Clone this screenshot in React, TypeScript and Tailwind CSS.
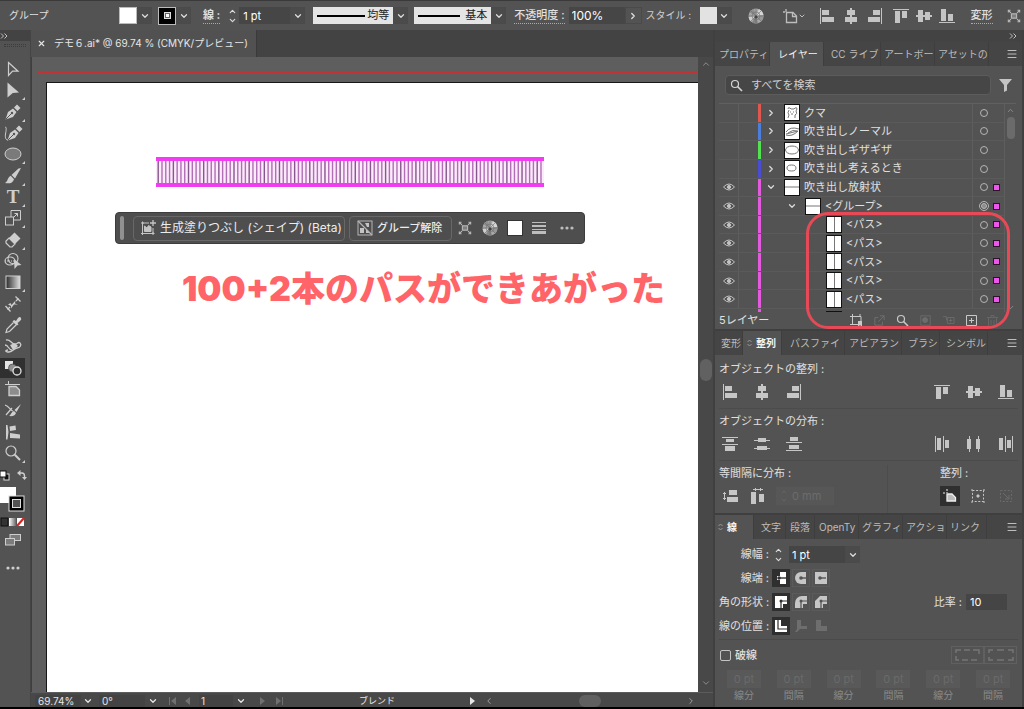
import type { ReactNode } from 'react'
import { ChevronDown, ChevronLeft, ChevronRight, ChevronUp, Menu, X } from 'lucide-react'

type Box = [number, number, number, number]

// Small 16px glyphs made only of bars
const BARS = {
  left: [[1, 0, 1, 16], [3, 2, 7, 5], [3, 9, 12, 5]],
  centerX: [[7, 0, 2, 16], [4, 2, 8, 5], [2, 9, 12, 5]],
  right: [[14, 0, 1, 16], [6, 2, 7, 5], [1, 9, 12, 5]],
  top: [[0, 1, 16, 1], [2, 3, 5, 12], [9, 3, 5, 7]],
  centerY: [[0, 7, 16, 2], [2, 2, 5, 12], [9, 4, 5, 8]],
  bottom: [[0, 14, 16, 1], [2, 1, 5, 12], [9, 6, 5, 7]],
  distTop: [[0, 1, 16, 1], [4, 3, 8, 3], [0, 8, 16, 1], [3, 10, 10, 5]],
  distMidY: [[0, 4, 16, 1], [4, 2, 8, 4], [0, 12, 16, 1], [3, 10, 10, 4]],
  distBottom: [[4, 1, 8, 4], [0, 6, 16, 1], [3, 9, 10, 4], [0, 14, 16, 1]],
  distLeft: [[1, 0, 1, 16], [3, 2, 4, 12], [9, 0, 1, 16], [11, 4, 4, 8]],
  distMidX: [[3, 0, 1, 16], [1, 3, 4, 10], [12, 0, 1, 16], [10, 3, 4, 10]],
  distRight: [[1, 2, 4, 12], [7, 0, 1, 16], [9, 4, 4, 8], [14, 0, 1, 16]],
  spaceY: [[2, 4, 1, 8], [1, 5, 3, 1], [1, 10, 3, 1], [7, 2, 8, 5], [5, 9, 11, 5]],
  spaceX: [[3, 1, 10, 1], [5, 0, 1, 3], [10, 0, 1, 3], [1, 4, 5, 12], [9, 6, 5, 8]],
} satisfies Record<string, Box[]>

type BarName = keyof typeof BARS

function BarIcon({ name }: { name: BarName }) {
  return (
    <svg viewBox="0 0 16 16" className="h-4 w-4" fill="currentColor" aria-hidden="true">
      {BARS[name].map(([x, y, w, h], i) => (
        <rect key={i} x={x} y={y} width={w} height={h} />
      ))}
    </svg>
  )
}

function IconButton({ label, children, className = '' }: { label: string; children: ReactNode; className?: string }) {
  return (
    <button type="button" aria-label={label} className={`flex shrink-0 items-center justify-center ${className}`}>
      {children}
    </button>
  )
}

function DropButton({ label }: { label: string }) {
  return (
    <IconButton label={label} className="h-[17px] w-[15px] border border-[#4a4a4a] bg-[#4b4b4b] text-[#dcdcdc]">
      <ChevronDown size={10} strokeWidth={3} />
    </IconButton>
  )
}

function Stepper({ label }: { label: string }) {
  return (
    <IconButton label={label} className="h-[18px] w-[13px] flex-col text-[#dcdcdc]">
      <ChevronUp size={9} strokeWidth={3} />
      <ChevronDown size={9} strokeWidth={3} />
    </IconButton>
  )
}

function SphereIcon() {
  return (
    <svg viewBox="0 0 16 16" className="h-4 w-4" aria-hidden="true">
      <circle cx="8" cy="8" r="7.5" fill="#a8a8a8" />
      <path d="M8 8 L1.5 4.5 A7.5 7.5 0 0 1 6 .8Z" fill="#8e8e8e" />
      <path d="M8 8 L11 1.2 A7.5 7.5 0 0 1 15.4 7Z" fill="#d6d6d6" />
      <path d="M8 8 L15.4 7 A7.5 7.5 0 0 1 13 13.6Z" fill="#979797" />
      <path d="M8 8 L10 15.2 A7.5 7.5 0 0 1 4 14.3Z" fill="#858585" />
      <path d="M8 8 L.6 9 A7.5 7.5 0 0 0 3 13.6Z" fill="#cfcfcf" />
      <path d="M8 .5v15M.5 8h15M2.700 2.700l10.600 10.600M13.300 2.700L2.700 13.300" stroke="#6a6a6a" strokeWidth=".6" />
      <circle cx="8" cy="8" r="4" fill="none" stroke="#707070" strokeWidth=".6" />
      <circle cx="8" cy="9" r="1.6" fill="#454545" />
    </svg>
  )
}

function IsolateIcon() {
  return (
    <svg viewBox="0 0 16 16" className="h-3.5 w-3.5" fill="none" stroke="currentColor" strokeWidth="1.2" aria-hidden="true">
      <rect x="5" y="5.5" width="6" height="5" fill="#808080" />
      <path d="M1.5 1.5 L4.5 4.5 M14.5 1.5 L11.5 4.5 M1.5 14.5 L4.5 11.5 M14.5 14.5 L11.5 11.5" />
      <path d="M1.5 4V1.5H4 M12 1.5h2.5V4 M1.5 12v2.5H4 M12 14.5h2.5V12" />
    </svg>
  )
}

function ArtboardIcon() {
  return (
    <svg viewBox="0 0 16 16" className="h-4 w-4" fill="none" stroke="currentColor" strokeWidth="1.3" aria-hidden="true">
      <path d="M4 1v3M1 4h2" />
      <path d="M4.5 4.5H11L14.5 8v6.5h-10Z" />
      <path d="M10.5 4.5v4h4" />
    </svg>
  )
}

function Magnifier() {
  return (
    <svg viewBox="0 0 13 13" className="h-[13px] w-[13px] shrink-0" fill="none" stroke="currentColor" aria-hidden="true">
      <circle cx="5" cy="5" r="3.500" strokeWidth="1.200" />
      <path d="M7.500 7.500 L12 12" strokeWidth="1.600" />
    </svg>
  )
}

function DoubleChevron() {
  return (
    <svg viewBox="0 0 8 6" className="h-1.5 w-2" fill="none" stroke="#c0c0c0" aria-hidden="true">
      <path d="M1 .5 L3.500 3 L1 5.500 M4.500 .5 L7 3 L4.500 5.500" />
    </svg>
  )
}

function ControlBar() {
  return (
    <header className="flex h-[30px] shrink-0 items-center overflow-hidden border-t border-[#3a3a3a] bg-[#535353] pl-[9px] text-[11px] whitespace-nowrap">
      <span className="w-[110px] shrink-0 text-[10px]">グループ</span>
      <button type="button" aria-label="塗り" className="h-[17px] w-[18px] shrink-0 border border-[#bbb] bg-white" />
      <DropButton label="塗りの色" />
      <button type="button" aria-label="線の色" className="ml-1.5 flex h-[18px] w-[18px] shrink-0 items-center justify-center border border-[#bbb] bg-black">
        <span className="flex h-[7px] w-[7px] items-center justify-center border border-[#ddd] bg-[#666]">
          <span className="h-[3px] w-[3px] bg-white" />
        </span>
      </button>
      <DropButton label="線の色を選択" />
      <label htmlFor="bar-stroke" className="ml-3 shrink-0 border-b border-dotted border-[#aaa] leading-[15px] font-bold">線 :</label>
      <span className="ml-1.5 flex shrink-0 items-center">
        <Stepper label="線幅を増減" />
        <input id="bar-stroke" defaultValue="1 pt" className="h-[17px] w-[51px] bg-[#464646] px-1 text-[11px] text-white" />
        <DropButton label="線幅の一覧" />
      </span>
      <button type="button" className="ml-2 flex h-[17px] w-[80px] shrink-0 items-center justify-between bg-[#e4e4e4] px-1 text-[#222]">
        <span className="h-[2px] w-12 bg-black" />
        均等
      </button>
      <DropButton label="可変線幅" />
      <button type="button" className="ml-1.5 flex h-[17px] w-[77px] shrink-0 items-center justify-between bg-[#e4e4e4] px-1 text-[#222]">
        <span className="h-[2px] w-[42px] bg-black" />
        基本
      </button>
      <DropButton label="ブラシ定義" />
      <label htmlFor="bar-opacity" className="ml-2 shrink-0 border-b border-dotted border-[#aaa] leading-[15px] font-medium">不透明度 :</label>
      <input id="bar-opacity" defaultValue="100%" className="ml-1 h-[17px] w-[56px] shrink-0 bg-[#464646] px-[3px] text-[12px] text-white" />
      <IconButton label="不透明度の詳細" className="h-[17px] w-[17px] border border-[#4a4a4a]">
        <ChevronRight size={10} strokeWidth={3} />
      </IconButton>
      <span className="ml-1 w-[54px] shrink-0 text-[10px] text-[#cfcfcf]">スタイル :</span>
      <button type="button" aria-label="スタイル" className="h-[17px] w-[17px] shrink-0 bg-[#e2e2e2]" />
      <DropButton label="スタイルの一覧" />
      <IconButton label="オブジェクトを再配色" className="ml-4"><SphereIcon /></IconButton>
      <IconButton label="アートボード" className="ml-[18px] text-[#bdbdbd]">
        <ArtboardIcon />
        <ChevronDown size={8} strokeWidth={3} />
      </IconButton>
      <div className="ml-[13px] flex shrink-0 gap-2 text-[#c4c4c4]">
        <IconButton label="左に整列"><BarIcon name="left" /></IconButton>
        <IconButton label="水平方向中央に整列"><BarIcon name="centerX" /></IconButton>
        <IconButton label="右に整列"><BarIcon name="right" /></IconButton>
      </div>
      <div className="ml-2.5 flex shrink-0 gap-[7px] text-[#c4c4c4]">
        <IconButton label="上に整列"><BarIcon name="top" /></IconButton>
        <IconButton label="垂直方向中央に整列"><BarIcon name="centerY" /></IconButton>
        <IconButton label="下に整列"><BarIcon name="bottom" /></IconButton>
      </div>
      <button type="button" className="ml-4 shrink-0 border-b border-dotted border-[#aaa] leading-[15px] font-medium">変形</button>
      <IconButton label="編集モード" className="ml-3.5 text-[#bdbdbd]"><IsolateIcon /></IconButton>
    </header>
  )
}

const TOOLS: { label: string; more?: boolean; active?: boolean; art: ReactNode }[] = [
  { label: '選択', art: <path d="M4.5 2.5 L14 11.2 H8.6 L4.5 15.5Z" fill="none" stroke="currentColor" strokeWidth="1.2" /> },
  { label: 'ダイレクト選択', more: true, art: <path d="M3.5 1.5 L15 11.5 L8.8 12 L3.5 16.5Z" /> },
  { label: 'ペン', more: true, art: <Nib /> },
  {
    label: '曲線',
    art: (
      <>
        <g transform="translate(2 0)"><Nib /></g>
        <path d="M1 3c2 0 1 4 .5 7s0 6 2.5 6" fill="none" stroke="currentColor" />
      </>
    ),
  },
  { label: '楕円形', more: true, art: <ellipse cx="9" cy="9" rx="8" ry="6" fill="#7a7a7a" stroke="currentColor" /> },
  {
    label: 'ブラシ',
    more: true,
    art: (
      <>
        <path d="M17 1 L11 11.500 L7.500 8 L14.500 1.500Z" />
        <path d="M6.700 8.800 L10 12.200 C9 16 5.500 17 1 16 C4 14.5 3.500 10.300 6.700 8.800Z" />
      </>
    ),
  },
  {
    label: '文字',
    more: true,
    art: <text x="9" y="15" textAnchor="middle" fontSize="19" fontWeight="bold" fontFamily="Liberation Serif, serif">T</text>,
  },
  {
    label: '拡大・縮小',
    more: true,
    art: (
      <g fill="none" stroke="currentColor">
        <path d="M7 8V1.500H16.500V11H10" />
        <rect x="1.500" y="8" width="8" height="8" />
        <path d="M9 9 L13.500 4.500 M10.500 4.500h3v3" />
      </g>
    ),
  },
  {
    label: '消しゴム',
    more: true,
    art: (
      <>
        <path d="M10.500 1.500 L16.500 7.500 L11 13 L5 7Z" />
        <path d="M5 7 L11 13 L8 16 H6 L2 12 V10Z" fill="none" stroke="currentColor" strokeWidth="1.2" />
      </>
    ),
  },
  {
    label: '形状',
    art: (
      <>
        <g fill="none" stroke="currentColor" strokeWidth="1.100">
          <circle cx="9" cy="6.500" r="5" />
          <ellipse cx="6" cy="9" rx="5" ry="4" />
          <path d="M1 9h10" strokeDasharray="1 1" />
        </g>
        <path d="M10 7 L17.500 13 L13.500 13.500 L10.500 17Z" />
      </>
    ),
  },
  {
    label: 'グラデーション',
    more: true,
    art: (
      <>
        <defs>
          <linearGradient id="toolGradient">
            <stop offset="0" stopColor="#2b2b2b" />
            <stop offset="1" stopColor="#e0e0e0" />
          </linearGradient>
        </defs>
        <rect x="2" y="3" width="14" height="12.500" fill="url(#toolGradient)" stroke="currentColor" />
      </>
    ),
  },
  {
    label: 'ものさし',
    art: (
      <>
        <path d="M3.500 14.500 L6 12 M12 6 L14.500 3.500" fill="none" stroke="currentColor" strokeWidth="1.300" />
        <path d="M1.500 11 L6.500 16.500 M11.500 1.500 L16.500 6.500" fill="none" stroke="currentColor" strokeWidth="1.300" />
        <path d="M6.500 8 L7.500 10 L11.500 5.500 L11 8.500 L14 9.500 L10 9.500 L7 13.500 L7 11 L4 9.500Z" />
      </>
    ),
  },
  {
    label: 'スポイト',
    art: (
      <>
        <path d="M10 4 L12 5 L14 2 Q16 0 17 2 Q18 3.500 16 5 L13.500 7 L14.500 8.500 L12.500 9.500 L8.500 5.500Z" />
        <path d="M9.500 6.500 L3 13 L2 16.500 L5.500 15.500 L12 9" fill="none" stroke="currentColor" strokeWidth="1.200" />
      </>
    ),
  },
  {
    label: 'シンボルスプレー',
    art: (
      <>
        <path d="M2 3c4-1 5 3 8 4s4-3 6-1 0 5-3 5-4 4-8 4-4-2-1-2M1 8c4 0 3 5 7 5" fill="none" stroke="currentColor" strokeWidth="1.300" />
        <path d="M6 8 L11 6 L14 9 L9 13Z" />
      </>
    ),
  },
  {
    label: 'ブレンド',
    active: true,
    art: (
      <>
        <rect x="1" y="2" width="8" height="8" />
        <circle cx="8.500" cy="9" r="4" fill="#8f8f8f" stroke="#303030" strokeWidth=".6" />
        <circle cx="13" cy="12" r="4" fill="#303030" stroke="currentColor" strokeWidth="1.300" />
      </>
    ),
  },
  {
    label: 'アートボード',
    art: (
      <>
        <path d="M4.500 1v4M1 4.500h15" fill="none" stroke="currentColor" />
        <path d="M5 6.500H12L15.500 10V15.500H5Z" fill="#8c8c8c" stroke="currentColor" strokeWidth="1.300" />
      </>
    ),
  },
  {
    label: 'ナイフ',
    art: (
      <>
        <path d="M1 4c4 1 6 6 8 6M2 14l6-7" fill="none" stroke="currentColor" strokeWidth="1.200" />
        <path d="M17 3 L12.500 11 L10.500 9Z M10 10 L12 12 C11 15 8 15.500 5 15 C7.500 13.500 7 11 10 10Z" />
      </>
    ),
  },
  { label: '整列', art: <path d="M2 2 L3.500 2 L4.500 9 L3.500 16.500 L2 16.500Z M5.500 3.500 L11.500 2.500 L12 7 L6 8Z M6 10 L16 11.500 V15.500 L6 15Z" /> },
  {
    label: 'ズーム',
    more: true,
    art: (
      <g fill="none" stroke="currentColor">
        <circle cx="7" cy="7" r="5" strokeWidth="1.200" />
        <path d="M10.800 10.800 L16 16" strokeWidth="2" />
      </g>
    ),
  },
]

function Nib() {
  return (
    <>
      <path d="M1.5 16.5 L4 9 L9 5.500 L12.500 9 L9 14Z" />
      <path d="M10 4.500 L13 1.500 L16.500 5 L13.500 8Z" />
      <path d="M2 16 L7.500 10.500" stroke="#535353" strokeWidth="1" />
      <circle cx="8" cy="10" r="1.200" fill="#535353" />
    </>
  )
}

function Toolbar() {
  return (
    <nav aria-label="ツール" className="flex w-[31px] shrink-0 flex-col border-r border-[#444] bg-[#535353] text-[#cecece]">
      <div className="flex h-[11px] items-center bg-[#434343]"><DoubleChevron /></div>
      <div className="mx-1 mt-[3px] h-[3px] border-y border-dotted border-[#3c3c3c]" />
      <div className="mt-3 flex h-[404px] flex-col justify-between">
        {TOOLS.map((tool) => (
          <IconButton
            key={tool.label}
            label={tool.label}
            className={`relative h-[20px] w-[25px] ${tool.active ? 'bg-[#303030] text-[#e4e4e4]' : ''}`}
          >
            <svg viewBox="0 0 18 18" className="h-[18px] w-[18px] overflow-visible" fill="currentColor" aria-hidden="true">{tool.art}</svg>
            {tool.more && (
              <svg viewBox="0 0 3 3" className="absolute right-0 bottom-0 h-[3px] w-[3px]" fill="currentColor" aria-hidden="true">
                <path d="M3 0V3H0Z" />
              </svg>
            )}
          </IconButton>
        ))}
      </div>
      <div className="mt-1 flex h-4 items-center justify-between pr-[3px]">
        <IconButton label="初期設定の塗りと線">
          <svg viewBox="0 0 10 11" className="h-[11px] w-[10px]" aria-hidden="true">
            <rect x="4" y="4" width="5" height="6" fill="#111" stroke="#ddd" />
            <rect x="0" y="1" width="6" height="6" fill="#fff" stroke="#111" />
          </svg>
        </IconButton>
        <IconButton label="塗りと線を入れ替え">
          <svg viewBox="0 0 10 10" className="h-[10px] w-[10px]" aria-hidden="true">
            <path d="M2 3h3q2.500 0 2.500 3v2" fill="none" stroke="currentColor" strokeWidth="1.400" />
            <path d="M3.500 0v6L0 3Z M5 7h5L7.500 10Z" fill="currentColor" />
          </svg>
        </IconButton>
      </div>
      <svg viewBox="0 0 25 28" className="mt-[2px] h-[28px] w-[25px]" role="img" aria-label="塗りと線">
        <rect x="0" y="2" width="16" height="16" fill="#fff" />
        <rect x="9" y="11" width="15" height="15" fill="#000" stroke="#ddd" />
        <rect x="12.500" y="14.500" width="8" height="8" fill="#535353" stroke="#ddd" />
      </svg>
      <svg viewBox="0 0 25 10" className="mt-[4px] h-[10px] w-[25px]" role="img" aria-label="塗りの種類">
        <defs>
          <linearGradient id="miniGradient">
            <stop offset="0" stopColor="#fff" />
            <stop offset="1" stopColor="#666" />
          </linearGradient>
        </defs>
        <rect x="1" y="1" width="7" height="8" fill="#333" stroke="#111" />
        <rect x="9" y="1" width="7" height="8" fill="url(#miniGradient)" />
        <rect x="17" y="1" width="7" height="8" fill="#fff" />
        <path d="M17 9 L24 1" stroke="#d22" strokeWidth="2" />
      </svg>
      <IconButton label="スクリーンモード" className="mt-[5px] h-4 w-[25px]">
        <svg viewBox="0 0 16 12" className="h-3 w-4" fill="#7c7c7c" stroke="currentColor" aria-hidden="true">
          <rect x="5" y=".5" width="10.500" height="6" />
          <rect x=".5" y="4.500" width="9" height="6.500" />
        </svg>
      </IconButton>
      <IconButton label="ツールバーを編集" className="mt-3 h-4 w-[25px]">
        <Dots />
      </IconButton>
    </nav>
  )
}

function Dots() {
  return (
    <svg viewBox="0 0 14 4" className="h-1 w-3.5" fill="currentColor" aria-hidden="true">
      <circle cx="2" cy="2" r="1.600" />
      <circle cx="7" cy="2" r="1.600" />
      <circle cx="12" cy="2" r="1.600" />
    </svg>
  )
}

const RUNG_COUNT = 102

function Ladder() {
  return (
    <svg viewBox="0 0 388 30" className="absolute top-[74px] left-[109px] h-[30px] w-[388px]" role="img" aria-label="パス">
      <rect x="0" y="4" width="388" height="22" fill="#fdeafd" />
      {Array.from({ length: RUNG_COUNT }, (_, i) => (
        <rect key={i} x={1.5 + i * 3.79} y="4" width="1.4" height="22" fill={i % 4 ? '#b06fb4' : '#84588a'} />
      ))}
      <rect x="0" y="0" width="388" height="4" fill="#f23cf2" />
      <rect x="0" y="26" width="388" height="4" fill="#f23cf2" />
    </svg>
  )
}

function TaskBar() {
  return (
    <div role="toolbar" aria-label="コンテキストタスクバー" className="absolute top-[129px] left-[68px] flex h-8 w-[470px] items-center rounded border border-[#3d3d3d] bg-[#4e4e4e] pl-1 whitespace-nowrap text-[#ececec]">
      <span className="h-6 w-1 rounded-sm bg-[#909090]" />
      <button type="button" className="ml-[9px] flex h-[25px] w-[212px] items-center gap-1 rounded-sm border border-[#686868] pl-1.5 text-[12px]">
        <svg viewBox="0 0 16 16" className="h-4 w-4 shrink-0" fill="none" stroke="#c4c4c4" aria-hidden="true">
          <path d="M9 3H2.500V13.500H13V8" />
          <path d="M1 3h3M2.500 1.500v3M1 13.500h3M2.500 12v3M11.500 13.500h3M13 12v3" />
          <path d="M4.500 11.500 V6 L7 8 L8.500 5.500 L11 7 V11.500Z" fill="#c4c4c4" />
          <path d="M13 0v6M10 3h6" strokeWidth="1.300" />
        </svg>
        生成塗りつぶし (シェイプ) (Beta)
      </button>
      <button type="button" className="ml-1 flex h-[25px] w-[103px] items-center gap-1 rounded-sm border border-[#686868] pl-[7px] text-[11px] font-medium">
        <svg viewBox="0 0 16 16" className="h-4 w-4 shrink-0" fill="none" stroke="#b4b4b4" aria-hidden="true">
          <rect x="1" y="1" width="14" height="14" />
          <path d="M8 3h4v4h-2Z M3 8h4v5H3Z M9 9l4 4H9Z" fill="#c4c4c4" stroke="none" />
          <path d="M1 1 L15 15" strokeWidth="1.300" />
        </svg>
        グループ解除
      </button>
      <div className="ml-1.5 flex items-center gap-2.5 text-[#bdbdbd]">
        <IconButton label="編集モード"><IsolateIcon /></IconButton>
        <IconButton label="再配色"><SphereIcon /></IconButton>
        <button type="button" aria-label="塗り" className="-ml-px h-4 w-4 border border-[#333] bg-white" />
        <IconButton label="線" className="-ml-px h-4 w-3.5">
          <svg viewBox="0 0 14 12" className="h-3 w-3.5" fill="currentColor" aria-hidden="true">
            <path d="M0 0h14v1H0ZM0 3h14v2H0ZM0 7h14v1H0ZM0 9h14v3H0Z" />
          </svg>
        </IconButton>
        <IconButton label="その他" className="ml-1"><Dots /></IconButton>
      </div>
    </div>
  )
}

function StatusBar() {
  return (
    <footer className="flex h-[15px] shrink-0 items-center overflow-hidden border-t border-[#5c5c5c] bg-[#484848] pt-0.5 pl-1 text-[10px] whitespace-nowrap text-[#e6e6e6]">
      <input aria-label="ズーム" defaultValue="69.74%" className="h-3 w-[46px] bg-[#434343] pl-[3px] text-[10px]" />
      <IconButton label="ズームの一覧" className="w-3.5"><ChevronDown size={10} strokeWidth={3} /></IconButton>
      <input aria-label="回転" defaultValue="0°" className="ml-1 h-3 w-[46px] bg-[#434343] pl-[3px] text-[10px]" />
      <IconButton label="回転の一覧" className="w-4"><ChevronDown size={10} strokeWidth={3} /></IconButton>
      <div className="ml-1 flex w-[30px] items-center justify-around text-[#707070]">
        <IconButton label="最初"><svg viewBox="0 0 8 8" className="h-2 w-2" fill="currentColor"><path d="M0 0h1v8H0ZM7 0v8L2 4Z" /></svg></IconButton>
        <IconButton label="前へ"><svg viewBox="0 0 8 8" className="h-2 w-2" fill="currentColor"><path d="M6 0v8L1 4Z" /></svg></IconButton>
      </div>
      <input aria-label="アートボード番号" defaultValue="1" className="ml-1 h-3 w-[34px] bg-[#434343] pl-0.5 text-[10px]" />
      <IconButton label="アートボードの一覧" className="w-4"><ChevronDown size={10} strokeWidth={3} /></IconButton>
      <div className="ml-1 flex w-[34px] items-center justify-around text-[#707070]">
        <IconButton label="次へ"><svg viewBox="0 0 8 8" className="h-2 w-2" fill="currentColor"><path d="M2 0v8L7 4Z" /></svg></IconButton>
        <IconButton label="最後"><svg viewBox="0 0 8 8" className="h-2 w-2" fill="currentColor"><path d="M1 0v8L6 4ZM7 0h1v8H7Z" /></svg></IconButton>
      </div>
      <span className="ml-[72px] flex-1 text-[9px] leading-3">ブレンド</span>
      <IconButton label="状態の表示"><svg viewBox="0 0 8 8" className="h-2 w-2" fill="currentColor"><path d="M2 0v8L7 4Z" /></svg></IconButton>
      <div className="ml-2 flex w-[212px] items-center justify-between text-[#b0b0b0]">
        <ChevronLeft size={10} strokeWidth={2} />
        <span className="h-[12px] w-[22px] rounded-full bg-[#606060]" />
        <ChevronRight size={10} strokeWidth={2} />
      </div>
      <span className="w-[17px] shrink-0" />
    </footer>
  )
}

function Document() {
  return (
    <main className="flex min-w-0 flex-1 flex-col">
      <div className="flex h-[27px] shrink-0 bg-[#434343]">
        <div className="flex w-[226px] items-center gap-2 border-r border-[#3a3a3a] bg-[#515151] pl-1.5 text-[10px] whitespace-nowrap text-[#e6e6e6]">
          <IconButton label="閉じる"><X size={9} strokeWidth={3} /></IconButton>
          <h1>デモ６.ai* @ 69.74 % (CMYK/プレビュー)</h1>
        </div>
      </div>
      <div className="flex min-h-0 flex-1">
        <div className="min-w-0 flex-1 overflow-hidden border-l border-[#3f3f3f] bg-[#5e5e5e] pt-[15px] pl-[5px]">
          <div className="h-full border-t border-l border-[#c23232] pt-[9px] pl-2">
            <div className="relative h-full border-t border-l border-[#161616] bg-white">
              <Ladder />
              <TaskBar />
              <p className="absolute top-[184px] left-[135px] text-[34px] leading-[44px] font-black whitespace-nowrap text-[#ff6468]">
                100+2本のパスができあがった
              </p>
            </div>
          </div>
        </div>
        <div className="flex w-[15px] shrink-0 flex-col items-center justify-between bg-[#484848] pt-0.5 pb-1 text-[#9a9a9a]">
          <ChevronUp size={10} />
          <span className="mb-2 h-[22px] w-3 rounded-full bg-[#616161]" />
          <ChevronDown size={10} />
        </div>
      </div>
      <StatusBar />
    </main>
  )
}

function Tab({ children, className, active, cycle }: { children: ReactNode; className: string; active?: boolean; cycle?: boolean }) {
  return (
    <button
      type="button"
      role="tab"
      aria-selected={Boolean(active)}
      className={`flex h-full shrink-0 items-center border-r border-[#3e3e3e] whitespace-nowrap ${className} ${
        active ? 'bg-[#535353] text-[#f4f4f4]' : 'text-[#bcbcbc]'
      } ${cycle ? 'gap-1 font-bold' : ''}`}
    >
      {cycle && (
        <svg viewBox="0 0 5 8" className="h-2 w-[5px]" fill="none" stroke="#999" aria-hidden="true">
          <path d="M.5 3 L2.500 1 L4.500 3 M.5 5 L2.500 7 L4.500 5" />
        </svg>
      )}
      {children}
    </button>
  )
}

function TabRow({ children }: { children: ReactNode }) {
  return (
    <div role="tablist" className="flex h-6 shrink-0 items-center bg-[#454545] text-[10px]">
      {children}
      <IconButton label="パネルメニュー" className="mr-[4px] ml-auto text-[#bdbdbd]"><Menu size={12} strokeWidth={2} /></IconButton>
    </div>
  )
}

type Thumb = 'bear' | 'scribble' | 'oval' | 'small' | 'row' | 'column'

const COLORS = {
  red: 'bg-[#de5850]',
  blue: 'bg-[#4c7fdd]',
  green: 'bg-[#55e052]',
  indigo: 'bg-[#4a4cd4]',
  pink: 'bg-[#e35ade]',
}

const LAYERS: { name: string; color: keyof typeof COLORS; depth: number; thumb: Thumb; open?: boolean; targeted?: boolean }[] = [
  { name: 'クマ', color: 'red', depth: 0, thumb: 'bear' },
  { name: '吹き出しノーマル', color: 'blue', depth: 0, thumb: 'scribble' },
  { name: '吹き出しギザギザ', color: 'green', depth: 0, thumb: 'oval' },
  { name: '吹き出し考えるとき', color: 'indigo', depth: 0, thumb: 'small' },
  { name: '吹き出し放射状', color: 'pink', depth: 0, thumb: 'row', open: true },
  { name: '<グループ>', color: 'pink', depth: 1, thumb: 'row', open: true, targeted: true },
  { name: '<パス>', color: 'pink', depth: 2, thumb: 'column' },
  { name: '<パス>', color: 'pink', depth: 2, thumb: 'column' },
  { name: '<パス>', color: 'pink', depth: 2, thumb: 'column' },
  { name: '<パス>', color: 'pink', depth: 2, thumb: 'column' },
  { name: '<パス>', color: 'pink', depth: 2, thumb: 'column' },
]

const INDENT = ['pl-1', 'pl-[25px]', 'pl-[45px]']

const THUMB_ART: Record<Thumb, ReactNode> = {
  bear: <path d="M4 5q0-2 2-1l1 1h3l1-1q2-1 2 1l-1 2q2 3-1 4v3M5 6q-2 3 0 5l-1 3M6 8h1M9 8h1M7 10h2" />,
  scribble: <path d="M2 9q4-6 13-3M2 11l12-3M2 12q6 2 12-4M4 10q5-4 9-2" />,
  oval: <ellipse cx="8" cy="8" rx="6.500" ry="4" />,
  small: <ellipse cx="7.500" cy="8" rx="4.500" ry="3" />,
  row: <path d="M1 8h14" />,
  column: <path d="M8.500 1v15" />,
}

function LayerRow({ layer }: { layer: (typeof LAYERS)[number] }) {
  const selected = layer.color === 'pink'
  return (
    <li className="flex min-h-0 flex-1 items-stretch border-b border-[#5a5a5a]">
      <button type="button" aria-label="表示の切り替え" className="flex w-[20px] shrink-0 items-center justify-center border-r border-[#5e5e5e] text-[#c2c2c2]">
        {selected && (
          <svg viewBox="0 0 12 8" className="h-2 w-3" fill="none" stroke="currentColor" aria-hidden="true">
            <path d="M.5 4 Q6 -2 11.500 4 Q6 10 .5 4Z" />
            <circle cx="6" cy="4" r="1.600" fill="currentColor" />
          </svg>
        )}
      </button>
      <span className="w-[19px] shrink-0" />
      <span className={`w-[3px] shrink-0 ${COLORS[layer.color]}`} />
      <div className={`flex min-w-0 flex-1 items-center ${INDENT[layer.depth]}`}>
        {layer.depth < 2 && (
          <IconButton label="展開" className="w-3 text-[#dadada]">
            {layer.open ? <ChevronDown size={10} strokeWidth={3} /> : <ChevronRight size={10} strokeWidth={3} />}
          </IconButton>
        )}
        <svg
          viewBox="0 0 16 17"
          className={`${layer.depth < 2 ? 'ml-[7px]' : 'ml-5'} h-[17px] w-4 shrink-0`}
          fill="none"
          stroke="#777"
          strokeWidth="1"
          aria-hidden="true"
        >
          <rect x=".5" y=".5" width="15" height="16" fill="#fff" stroke="#111" />
          {THUMB_ART[layer.thumb]}
        </svg>
        <span className="ml-1 whitespace-nowrap">{layer.name}</span>
      </div>
      <div className="flex w-8 shrink-0 items-center gap-[5px] border-l border-[#5e5e5e] pl-1.5">
        <IconButton label="ターゲット">
          <svg viewBox="0 0 10 10" className="h-[10px] w-[10px]" fill="none" stroke="#b5b5b5" aria-hidden="true">
            <circle cx="5" cy="5" r={layer.targeted ? 4.5 : 3.5} />
            {layer.targeted && <circle cx="5" cy="5" r="2.500" fill="#8d8d8d" />}
          </svg>
        </IconButton>
        {selected && <span className="-ml-px h-[7px] w-[7px] border border-[#2c142c] bg-[#ee55ea]" />}
      </div>
    </li>
  )
}

function LayersPanel() {
  return (
    <section aria-label="レイヤー" className="relative flex shrink-0 flex-col">
      <TabRow>
        <Tab className="w-[55px] pl-1">プロパティ</Tab>
        <Tab className="w-[54px] pl-2" active>レイヤー</Tab>
        <Tab className="w-[57px] pl-[7px]">CC ライブ</Tab>
        <Tab className="w-[54px] pl-[3px]">アートボー</Tab>
        <Tab className="w-[54px] pl-[3px]">アセットの</Tab>
      </TabRow>
      <div className="mt-[9px] mr-2.5 ml-2.5 flex items-center gap-2">
        <label className="flex h-5 flex-1 items-center gap-2 rounded-sm border border-[#5c5c5c] bg-[#464646] px-1 text-[#d6d6d6]">
          <Magnifier />
          <input type="search" placeholder="すべてを検索" aria-label="すべてを検索" className="min-w-0 flex-1 bg-transparent text-[11px] placeholder:text-[#d0d0d0]" />
        </label>
        <IconButton label="フィルター" className="text-[#c4c4c4]">
          <svg viewBox="0 0 13 13" className="h-[13px] w-[13px]" fill="currentColor" aria-hidden="true">
            <path d="M0 0h13L8 6v5.500L5 13V6Z" />
          </svg>
        </IconButton>
      </div>
      <div className="mt-2 mr-1.5 ml-1 flex h-[209px] overflow-hidden border-t border-[#606060]">
        <div className="flex min-w-0 flex-1 flex-col">
          <ul className="flex h-[205px] shrink-0 flex-col text-[11px]">
            {LAYERS.map((layer, i) => (
              <LayerRow key={i} layer={layer} />
            ))}
          </ul>
          <div className="flex h-[3px]">
            <span className="ml-[39px] w-[3px] bg-[#e35ade]" />
            <span className="ml-[65px] h-px w-4 self-end bg-[#111]" />
          </div>
        </div>
        <div className="flex w-3 shrink-0 flex-col items-center border-l border-[#5e5e5e] text-[#9c9c9c]">
          <ChevronUp size={9} className="mt-0.5" />
          <span className="mt-0.5 h-[22px] w-2 rounded-full bg-[#6b6b6b]" />
          <ChevronDown size={9} className="mt-auto" />
        </div>
      </div>
      <div className="flex h-[17px] items-center pr-6 pl-1 text-[11px]">
        <span className="flex-1">5レイヤー</span>
        <div className="flex items-center gap-[10px] text-[#c9c9c9]">
          <IconButton label="書き出し用に追加">
            <svg viewBox="0 0 13 13" className="h-[13px] w-[13px]" fill="none" stroke="currentColor"><path d="M2.500 0v10.500H8M0 2.500h11V7M10 0v3M0 10.500h4" /><path d="M8 7h4v6l-2-2-2 2Z" fill="currentColor" stroke="none" /></svg>
          </IconButton>
          <IconButton label="書き出し" className="text-[#727272]">
            <svg viewBox="0 0 13 13" className="h-[11px] w-[13px]" fill="none" stroke="currentColor"><path d="M5 3H1v9h9V8M7 1h5v5M12 1L5 8" /></svg>
          </IconButton>
          <IconButton label="オブジェクトの位置"><Magnifier /></IconButton>
          <IconButton label="クリッピングマスク" className="text-[#6d6d6d]">
            <svg viewBox="0 0 13 13" className="h-[11px] w-[13px]" fill="none" stroke="currentColor"><rect x="1" y="1" width="11" height="11" /><circle cx="6" cy="6" r="3" fill="currentColor" /></svg>
          </IconButton>
          <IconButton label="サブレイヤーを作成" className="text-[#6d6d6d]">
            <svg viewBox="0 0 14 13" className="h-[11px] w-[14px]" fill="none" stroke="currentColor"><path d="M0 2h4v4h2M5 3v7h8V3ZM9 4v5M7 6.500h4" /></svg>
          </IconButton>
          <IconButton label="レイヤーを作成">
            <svg viewBox="0 0 11 11" className="h-[11px] w-[11px]" fill="none" stroke="currentColor"><path d="M.5 .5h10v10H.5ZM5.500 3v5M3 5.500h5" /></svg>
          </IconButton>
          <IconButton label="削除" className="text-[#666]">
            <svg viewBox="0 0 11 12" className="h-3 w-[11px]" fill="none" stroke="currentColor"><path d="M0 2.500h11M4 2V.5h3V2M1.500 3v8.500h8V3M4 5v5M7 5v5" /></svg>
          </IconButton>
        </div>
      </div>
      <div className="pointer-events-none absolute right-3 bottom-0 h-[117px] w-[204px] rounded-[22px] border-[3px] border-[#e74a56]" />
    </section>
  )
}

function AlignGroup({ names }: { names: [BarName, string][] }) {
  return (
    <div className="flex gap-4 text-[#c6c6c6]">
      {names.map(([name, label]) => (
        <IconButton key={name} label={label}><BarIcon name={name} /></IconButton>
      ))}
    </div>
  )
}

function AlignPanel() {
  return (
    <section aria-label="整列" className="flex shrink-0 flex-col border-t-2 border-[#3f3f3f]">
      <TabRow>
        <Tab className="w-[28px] pl-1.5">変形</Tab>
        <Tab className="w-[39px] pl-1" active cycle>整列</Tab>
        <Tab className="w-[63px] pl-2">パスファイ</Tab>
        <Tab className="w-[57px] pl-1">アピアラン</Tab>
        <Tab className="w-[38px] pl-1.5">ブラシ</Tab>
        <Tab className="w-[48px] pl-1.5">シンボル</Tab>
      </TabRow>
      <div className="px-1 text-[11px] leading-4">
        <h2 className="mt-1.5">オブジェクトの整列 :</h2>
        <div className="mt-[7px] flex justify-between border-b border-[#4c4c4c] pr-1 pl-[3px] pb-2">
          <AlignGroup names={[['left', '左'], ['centerX', '水平方向中央'], ['right', '右']]} />
          <AlignGroup names={[['top', '上'], ['centerY', '垂直方向中央'], ['bottom', '下']]} />
        </div>
        <h2 className="mt-1">オブジェクトの分布 :</h2>
        <div className="mt-[7px] flex justify-between border-b border-[#4c4c4c] pr-1 pl-[3px] pb-2">
          <AlignGroup names={[['distTop', '上端で分布'], ['distMidY', '垂直に分布'], ['distBottom', '下端で分布']]} />
          <AlignGroup names={[['distLeft', '左端で分布'], ['distMidX', '水平に分布'], ['distRight', '右端で分布']]} />
        </div>
        <div className="flex h-[52px] pt-1">
          <div className="flex-1 border-r border-[#4c4c4c]">
            <h2>等間隔に分布 :</h2>
            <div className="mt-1.5 flex items-center gap-3 px-[3px] text-[#c6c6c6]">
              <IconButton label="垂直方向等間隔"><BarIcon name="spaceY" /></IconButton>
              <IconButton label="水平方向等間隔"><BarIcon name="spaceX" /></IconButton>
              <label className="-ml-0.5 flex h-[18px] w-[58px] items-center gap-1 bg-[#575757] pl-1 text-[#6c6c6c]">
                <span className="flex flex-col">
                  <ChevronUp size={8} />
                  <ChevronDown size={8} />
                </span>
                <input aria-label="間隔" disabled defaultValue="0 mm" className="min-w-0 flex-1 text-[11px]" />
              </label>
            </div>
          </div>
          <div className="w-[130px] pl-[52px]">
            <h2>整列 :</h2>
            <div className="mt-[5px] flex items-center gap-2">
              <IconButton label="アートボードに整列" className="h-5 w-5 bg-[#2f2f2f] text-[#eee]">
                <svg viewBox="0 0 14 14" className="h-3.5 w-3.5" fill="none" stroke="currentColor"><path d="M4 0v4M0 4h3" strokeDasharray="2 1" /><path d="M4 5h5l3.500 3.500V12H4Z" fill="#bbb" strokeWidth="1.300" /></svg>
              </IconButton>
              <IconButton label="選択範囲に整列" className="h-5 w-5 text-[#c6c6c6]">
                <svg viewBox="0 0 14 14" className="h-3.5 w-3.5" fill="none" stroke="currentColor"><path d="M1.500 1.500h11v11h-11Z" strokeDasharray="2 1.600" /><path d="M6 6h2v2H6Z M0 1h2M12 1h2M0 13h2M12 13h2" fill="currentColor" /></svg>
              </IconButton>
              <IconButton label="キーオブジェクトに整列" className="h-5 w-5 text-[#6b6b6b]">
                <svg viewBox="0 0 14 14" className="h-3.5 w-3.5" fill="none" stroke="currentColor"><path d="M1.500 1.500h11v11h-11Z" strokeDasharray="2 1.600" /><path d="M4 4l6 6M10 6v4H6" /></svg>
              </IconButton>
            </div>
          </div>
        </div>
      </div>
    </section>
  )
}

// Three choices in a row, the first one picked
function ChoiceRow({ label, art, lastDim }: { label: string; art: ReactNode[]; lastDim?: boolean }) {
  return (
    <div className="flex h-6 items-center">
      <span className="w-[50px] shrink-0 text-right whitespace-nowrap">{label} :</span>
      <div className="ml-[3px] flex gap-0.5">
        {art.map((shape, i) => (
          <IconButton
            key={i}
            label={`${label} ${i + 1}`}
            className={`h-[18px] w-[18px] ${i === 0 ? 'bg-[#2f2f2f] text-white' : lastDim ? 'text-[#6e6e6e]' : 'border border-[#5b5b5b] text-[#c6c6c6]'}`}
          >
            <svg viewBox="0 0 12 12" className="h-3 w-3" fill="currentColor" aria-hidden="true">{shape}</svg>
          </IconButton>
        ))}
      </div>
    </div>
  )
}

function HoleLine({ color = '#535353', x = 4 }: { color?: string; x?: number }) {
  return <path d={`M${x} 6h${11 - x}`} stroke={color} strokeWidth="1.400" />
}

const CAPS = [
  <>
    <path d="M5 0h6v12H5V8H2V4h3Z" />
    <circle cx="4" cy="6" r="1.800" fill="#2f2f2f" />
    <HoleLine color="#2f2f2f" />
  </>,
  <>
    <path d="M11 0v12H6A6 6 0 0 1 6 0Z" />
    <circle cx="6" cy="6" r="1.800" fill="#535353" />
    <HoleLine x={6} />
  </>,
  <>
    <path d="M0 0h12v12H0Z" />
    <circle cx="5" cy="6" r="1.800" fill="#535353" />
    <HoleLine x={5} />
  </>,
]

const JOINS = [
  <>
    <path d="M0 0h12v8H8v4H0Z" />
    <circle cx="6" cy="5" r="1.500" fill="#2f2f2f" />
    <path d="M6 12V5h6" fill="none" stroke="#2f2f2f" strokeWidth="1.200" />
  </>,
  <>
    <path d="M12 0v8H8v4H0V7A7 7 0 0 1 7 0Z" />
    <circle cx="6" cy="5" r="1.500" fill="#535353" />
    <path d="M6 12V5h6" fill="none" stroke="#535353" strokeWidth="1.200" />
  </>,
  <>
    <path d="M12 0v8H8v4H0V5L5 0Z" />
    <circle cx="6" cy="5" r="1.500" fill="#535353" />
    <path d="M6 12V5h6" fill="none" stroke="#535353" strokeWidth="1.200" />
  </>,
]

const POSITIONS = [
  <>
    <path d="M0 0h6v6h6v6H0Z" />
    <path d="M3 0v9h9" fill="none" stroke="#2f2f2f" strokeWidth="1.200" />
  </>,
  <path d="M2 0h4v6h6v3H5L2 12H0L2 9Z" />,
  <path d="M1 0h5v6h6v5H1Z" />,
]

const DASHES = ['線分', '間隔', '線分', '間隔', '線分', '間隔']

function StrokePanel() {
  return (
    <section aria-label="線" className="flex min-h-0 flex-1 flex-col border-t-2 border-[#3f3f3f]">
      <TabRow>
        <Tab className="mr-1 w-[39px] pl-[3px]" active cycle>線</Tab>
        <Tab className="w-[28px] pl-[3px]">文字</Tab>
        <Tab className="w-[29px] pl-1">段落</Tab>
        <Tab className="w-[44px] pl-1">OpenTy</Tab>
        <Tab className="w-[44px] pl-[3px]">グラフィ</Tab>
        <Tab className="w-[44px] pl-[3px]">アクショ</Tab>
        <Tab className="w-[40px] pl-[3px]">リンク</Tab>
      </TabRow>
      <div className="mx-1 mt-1 border-b border-[#4a4a4a] pb-px text-[11px]">
        <div className="flex h-[23px] items-center">
          <label htmlFor="stroke-width" className="w-[50px] shrink-0 text-right">線幅 :</label>
          <div className="ml-[3px] flex items-center">
            <Stepper label="線幅を増減" />
            <input id="stroke-width" defaultValue="1 pt" className="ml-1 h-[17px] w-14 bg-[#454545] pl-[3px] text-[11px] text-white" />
            <DropButton label="線幅の一覧" />
          </div>
        </div>
        <ChoiceRow label="線端" art={CAPS} />
        <div className="flex items-center justify-between">
          <ChoiceRow label="角の形状" art={JOINS} />
          <div className="mr-[11px] flex items-center gap-1">
            <label htmlFor="miter">比率 :</label>
            <input id="miter" defaultValue="10" className="h-4 w-[41px] bg-[#454545] pl-1 text-[11px] text-white" />
          </div>
        </div>
        <ChoiceRow label="線の位置" art={POSITIONS} lastDim />
      </div>
      <div className="flex h-[30px] shrink-0 items-center justify-between pr-[5px] pl-[5px]">
        <label className="flex items-center gap-1 text-[11px] font-medium">
          <input type="checkbox" className="h-[11px] w-[11px] appearance-none rounded-[2px] border border-[#c4c4c4]" />
          破線
        </label>
        <div className="flex text-[#757575]">
          <IconButton label="正確な間隔" className="h-[18px] w-[33px] border border-[#606060]">
            <svg viewBox="0 0 26 12" className="h-3 w-[26px]" fill="none" stroke="currentColor" strokeWidth="1.500"><path d="M1 4V1h5M9 1h6M18 1h6v4M1 7v4h3M7 11h6M16 11h6" /></svg>
          </IconButton>
          <IconButton label="先端に整列" className="h-[18px] w-[33px] border border-[#606060]">
            <svg viewBox="0 0 26 12" className="h-3 w-[26px]" fill="none" stroke="currentColor" strokeWidth="1.500"><path d="M1 4V1h4M9 1h7M20 1h5v3M1 8v3h4M9 11h7M20 11h5V8" /></svg>
          </IconButton>
        </div>
      </div>
      <div className="grid grid-cols-6 px-1 text-center text-[10px] text-[#8a8a8a]">
        {DASHES.map((name, i) => (
          <label key={i} className="flex flex-col items-center">
            <input disabled defaultValue="0 pt" className="h-[18px] w-[34px] bg-[#595959] text-center text-[11px] text-[#6a6a6a]" />
            <span className="leading-[15px]">{name}</span>
          </label>
        ))}
      </div>
    </section>
  )
}

export default function App() {
  return (
    <div className="flex h-screen flex-col overflow-hidden border-b-2 border-black bg-[#535353] font-['Inter','Noto_Sans_CJK_JP',sans-serif] text-[#e0e0e0]">
      <ControlBar />
      <div className="flex min-h-0 flex-1">
        <Toolbar />
        <Document />
        <aside className="flex w-[311px] shrink-0 flex-col overflow-hidden border-r-2 border-l-2 border-[#404040] bg-[#535353]">
          <div className="flex h-3 shrink-0 items-center justify-end bg-[#434343] pr-[5px]"><DoubleChevron /></div>
          <LayersPanel />
          <AlignPanel />
          <StrokePanel />
        </aside>
      </div>
    </div>
  )
}
